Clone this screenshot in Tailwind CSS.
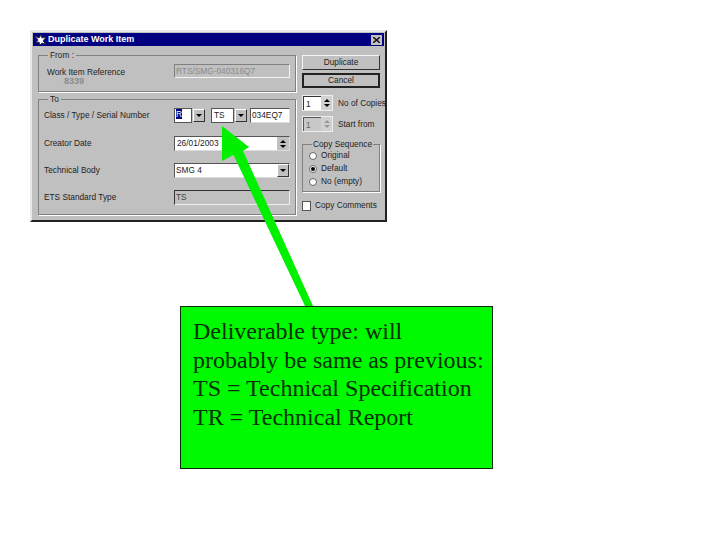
<!DOCTYPE html>
<html lang="en">
<head>
<meta charset="utf-8"/>
<title>Duplicate Work Item</title>
<script src="https://cdn.jsdelivr.net/npm/@tailwindcss/browser@4"></script>
</head>
<body class="bg-white">
<div class="relative w-[720px] h-[540px] overflow-hidden pt-[30px] font-['Liberation_Sans',sans-serif]">

  <!-- dialog -->
  <div class="ml-[30px] w-[357px] h-[192px] bg-[#c0c0c0] border-t-2 border-l-2 border-t-[#e8e8e8] border-l-[#e8e8e8] border-r-2 border-b-2 border-r-[#222] border-b-[#222] p-px text-[8.3px] leading-[11px] text-[#222]">
    <div class="flex items-center justify-between h-[13px] bg-[#000080] px-[1px] text-white font-bold text-[9px]">
      <div class="flex items-center gap-[1px]">
        <svg width="13" height="12" viewBox="0 0 13 12"><path d="M1 2l4 2 2-3 1 3 4-1-3 4 3 3-4-1-2 2-1-3-3 1 2-3z" fill="#fff" stroke="#333" stroke-width="1"/></svg>
        <span>Duplicate Work Item</span>
      </div>
      <div class="w-[11px] h-[10px] mr-[1px] bg-[#c0c0c0] flex items-center justify-center">
        <svg width="7" height="6" viewBox="0 0 7 6"><path d="M0 0l7 6M7 0L0 6" stroke="#111" stroke-width="1.4"/></svg>
      </div>
    </div>

    <div class="flex gap-[6px] pl-[5px] pt-[4px]">
      <!-- left column -->
      <div class="w-[258px] flex flex-col gap-[2px]">
        <fieldset class="h-[42px] border border-[#808080] shadow-[1px_1px_0_#fff] pl-[8px]">
          <legend class="px-[2px] ml-[1px] h-[11px]">From :</legend>
          <div class="flex justify-between pr-[5px] pt-[3px]">
            <div>
              <div class="mt-[3px]">Work Item Reference</div>
              <div class="ml-[17px] -mt-[2px] font-bold text-[9px] text-[#8c8c8c]">8339</div>
            </div>
            <div class="w-[116px] h-[14px] bg-[#c0c0c0] border border-[#808080] border-r-[#f4f4f4] border-b-[#f4f4f4] px-[1px] text-[#8a8a8a] leading-[12px]">RTS/SMG-040316Q7</div>
          </div>
        </fieldset>

        <fieldset class="h-[121px] border border-[#808080] shadow-[1px_1px_0_#fff] pl-[5px]">
          <legend class="px-[2px] ml-[4px] h-[11px]">To</legend>
          <div class="flex flex-col gap-[12px] pt-[3px] pr-[5px]">
            <div class="flex items-center h-[15px] mb-px justify-between">
              <span>Class / Type / Serial Number</span>
              <div class="flex w-[116px]">
                <div class="w-[18px] h-[15px] bg-white border border-[#555] px-px"><span class="bg-[#000080] text-white">R</span></div>
                <div class="w-[12px] h-[13px] mt-px ml-px mr-[6px] bg-[#c0c0c0] border border-[#333] border-t-white border-l-white flex items-center justify-center"><div class="border-x-[3px] border-t-[3px] border-x-transparent border-t-black"></div></div>
                <div class="w-[23px] h-[15px] bg-white border border-[#555] px-[2px] leading-[13px]">TS</div>
                <div class="w-[12px] h-[13px] mt-px ml-px mr-[3px] bg-[#c0c0c0] border border-[#333] border-t-white border-l-white flex items-center justify-center"><div class="border-x-[3px] border-t-[3px] border-x-transparent border-t-black"></div></div>
                <div class="flex-1 h-[15px] bg-white border border-[#555] border-r-[#ddd] border-b-[#ddd] px-px leading-[13px]">034EQ7</div>
              </div>
            </div>
            <div class="flex items-center h-[15px] justify-between">
              <span>Creator Date</span>
              <div class="flex w-[116px] h-[15px] bg-white border border-[#555] border-r-[#ddd] border-b-[#ddd]">
                <span class="flex-1 px-[2px] leading-[13px]">26/01/2003</span>
                <div class="w-[12px] bg-[#c0c0c0] flex flex-col items-center justify-center gap-[2px]">
                  <div class="border-x-[3px] border-b-[3px] border-x-transparent border-b-black"></div>
                  <div class="border-x-[3px] border-t-[3px] border-x-transparent border-t-black"></div>
                </div>
              </div>
            </div>
            <div class="flex items-center h-[15px] justify-between">
              <span>Technical Body</span>
              <div class="flex w-[116px] h-[15px] bg-white border border-[#555] border-r-[#ddd] border-b-[#ddd]">
                <span class="flex-1 px-px leading-[13px]">SMG 4</span>
                <div class="w-[12px] bg-[#c0c0c0] border border-[#333] border-t-white border-l-white flex items-center justify-center"><div class="border-x-[3px] border-t-[3px] border-x-transparent border-t-black"></div></div>
              </div>
            </div>
            <div class="flex items-center h-[15px] justify-between">
              <span>ETS  Standard Type</span>
              <div class="w-[116px] h-[15px] bg-[#c0c0c0] border border-[#333] border-r-[#eee] border-b-[#eee] px-px leading-[13px] text-[#444]">TS</div>
            </div>
          </div>
        </fieldset>
      </div>

      <!-- right column -->
      <div class="w-[78px] flex flex-col pt-[5px]">
        <div class="h-[15px] bg-[#c0c0c0] border border-[#333] border-t-[#f4f4f4] border-l-[#f4f4f4] text-center leading-[13px]">Duplicate</div>
        <div class="mt-[3px] h-[15px] bg-[#c0c0c0] border-2 border-[#222] text-center leading-[11px]">Cancel</div>

        <div class="mt-[7px] flex items-center gap-[5px] h-[16px]">
          <div class="flex w-[31px] h-[16px] shrink-0 bg-[#d0d0d0] border border-[#eee]">
            <span class="w-[18px] bg-white px-[2px] leading-[14px] border-l border-t border-[#333]">1</span>
            <div class="flex-1 flex flex-col items-center justify-center gap-[2px]">
              <div class="border-x-[3px] border-b-[3px] border-x-transparent border-b-black"></div>
              <div class="border-x-[3px] border-t-[3px] border-x-transparent border-t-black"></div>
            </div>
          </div>
          <span class="whitespace-nowrap">No of Copies</span>
        </div>
        <div class="mt-[5px] flex items-center gap-[5px] h-[16px]">
          <div class="flex w-[31px] h-[16px] shrink-0 bg-[#d0d0d0] border border-[#eee]">
            <span class="w-[18px] bg-[#c8c8c8] px-[2px] leading-[14px] border-l border-t border-[#555] text-[#666]">1</span>
            <div class="flex-1 flex flex-col items-center justify-center gap-[2px]">
              <div class="border-x-[3px] border-b-[3px] border-x-transparent border-b-[#999]"></div>
              <div class="border-x-[3px] border-t-[3px] border-x-transparent border-t-[#999]"></div>
            </div>
          </div>
          <span class="whitespace-nowrap">Start from</span>
        </div>

        <fieldset class="mt-[7px] h-[53px] border border-[#808080] shadow-[1px_1px_0_#fff] pl-[6px]">
          <legend class="px-px ml-[3px] h-[11px] whitespace-nowrap">Copy Sequence</legend>
          <div class="flex flex-col gap-[2px]">
            <div class="flex items-center gap-[4px] h-[11px]"><span class="w-[8px] h-[8px] rounded-full bg-white border border-[#666]"></span>Original</div>
            <div class="flex items-center gap-[4px] h-[11px]"><span class="w-[8px] h-[8px] rounded-full bg-white border border-[#666] flex items-center justify-center"><span class="w-[4px] h-[4px] rounded-full bg-black"></span></span>Default</div>
            <div class="flex items-center gap-[4px] h-[11px]"><span class="w-[8px] h-[8px] rounded-full bg-white border border-[#666]"></span>No (empty)</div>
          </div>
        </fieldset>

        <div class="mt-[8px] flex items-center gap-[4px] h-[11px] whitespace-nowrap">
          <span class="w-[9px] h-[10px] bg-white border border-[#555]"></span>Copy Comments
        </div>
      </div>
    </div>
  </div>

  <!-- note -->
  <div class="ml-[180px] mt-[84px] w-[313px] h-[163px] bg-[#00fa00] border border-[#0a2a0a] pl-[12px] pt-[10px] font-['Liberation_Serif',serif] text-[24px] leading-[28.6px] text-[#033003]">
    Deliverable type: will<br/>probably be same as previous:<br/>TS = Technical Specification<br/>TR = Technical Report
  </div>

  <!-- arrow from note up to the type field -->
  <svg class="absolute left-0 top-0" width="720" height="540" viewBox="0 0 720 540">
    <path d="M222 126 L222 161 L233.5 155 L305 306 L313 306 L243 151 L249 147 Z" fill="#00f000"/>
  </svg>
</div>
</body>
</html>
